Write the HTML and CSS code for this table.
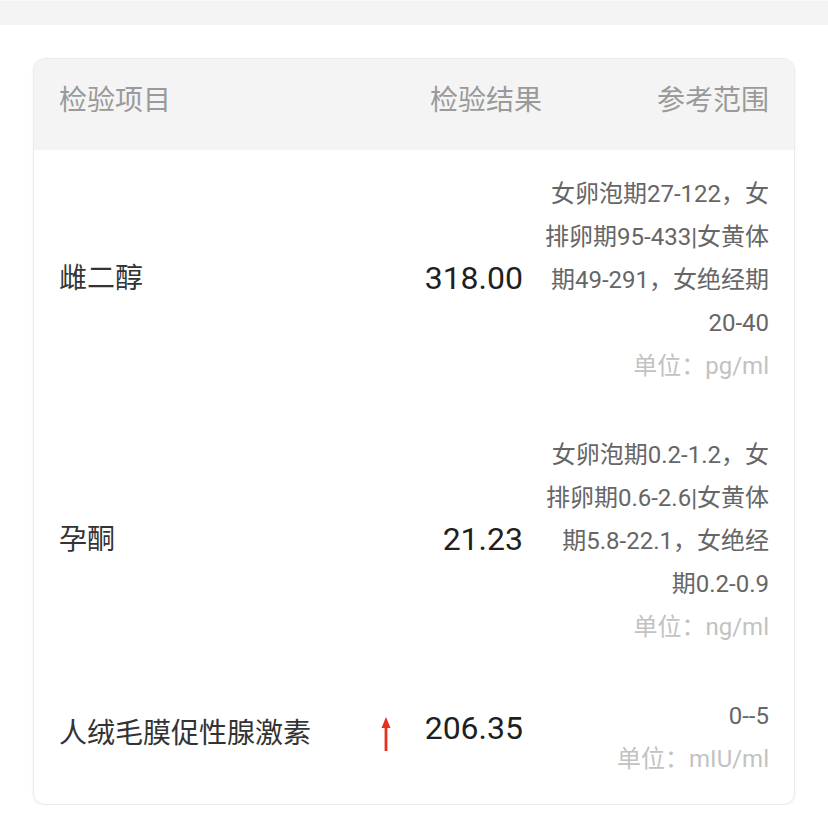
FILE: index.html
```html
<!DOCTYPE html>
<html lang="zh-CN">
<head>
<meta charset="utf-8">
<title>检验报告</title>
<link rel="stylesheet" href="styles.css">
</head>
<body>
<div class="topbar"></div>
<main class="page">
  <section class="card">
    <div class="thead">
      <div class="th th-name">检验项目</div>
      <div class="th th-value">检验结果</div>
      <div class="th th-range">参考范围</div>
    </div>
    <div class="row">
      <div class="name">雌二醇</div>
      <div class="value"><span class="num">318.00</span></div>
      <div class="range">
        <div class="ref">女卵泡期27-122，女排卵期95-433|女黄体期49-291，女绝经期20-40</div>
        <div class="unit">单位：pg/ml</div>
      </div>
    </div>
    <div class="row">
      <div class="name">孕酮</div>
      <div class="value"><span class="num">21.23</span></div>
      <div class="range">
        <div class="ref">女卵泡期0.2-1.2，女排卵期0.6-2.6|女黄体期5.8-22.1，女绝经期0.2-0.9</div>
        <div class="unit">单位：ng/ml</div>
      </div>
    </div>
    <div class="row row-short">
      <div class="name">人绒毛膜促性腺激素</div>
      <div class="value">
        <svg class="arrow" width="10" height="36" viewBox="0 0 10 36" aria-hidden="true">
          <path d="M5 1 L9.5 12 L6.4 12 L6.4 35 L3.6 35 L3.6 12 L0.5 12 Z" fill="#e5301c"/>
        </svg>
        <span class="num">206.35</span>
      </div>
      <div class="range">
        <div class="ref">0--5</div>
        <div class="unit">单位：mIU/ml</div>
      </div>
    </div>
  </section>
</main>
</body>
</html>
```

FILE: styles.css
```css
* {
  box-sizing: border-box;
}

html, body {
  margin: 0;
  padding: 0;
  background: #ffffff;
}

body {
  font-family: Roboto, "Noto Sans CJK SC", "Noto Sans", sans-serif;
  color: #333333;
}

.topbar {
  height: 25px;
  background: #f4f4f4;
  border-top: 1px solid #fafafa;
}

.page {
  padding: 33px 33px 0 33px;
}

.card {
  border: 1px solid #ebebeb;
  border-radius: 12px;
  overflow: hidden;
  box-shadow: 0 1px 3px rgba(0, 0, 0, 0.06);
  background: #ffffff;
}

.thead {
  display: flex;
  align-items: center;
  height: 91px;
  padding: 0 25px 8px 25px;
  background: #f4f4f4;
}

.th {
  font-size: 28px;
  color: #9a9a9a;
  line-height: 40px;
}

.th-name {
  flex: 1;
}

.th-range {
  margin-left: 115px;
}

.row {
  display: grid;
  grid-template-columns: 1fr auto 226px;
  column-gap: 20px;
  align-items: center;
  padding: 23px 25px;
}

.name {
  font-size: 28px;
  color: #333333;
  line-height: 40px;
  margin-bottom: 3px;
}

.value {
  display: flex;
  align-items: center;
  justify-content: flex-end;
  gap: 34px;
  margin-bottom: 6px;
}

.row-short .name {
  margin-bottom: 8px;
}

.row-short .value {
  margin-bottom: 20px;
}

.num {
  font-size: 32px;
  color: #1f1f1f;
  line-height: 40px;
}

.arrow {
  display: block;
  margin-top: 12px;
}

.range {
  text-align: right;
  font-size: 24px;
  line-height: 43px;
}

.ref {
  color: #666666;
}

.unit {
  color: #c2c2c2;
}
```
